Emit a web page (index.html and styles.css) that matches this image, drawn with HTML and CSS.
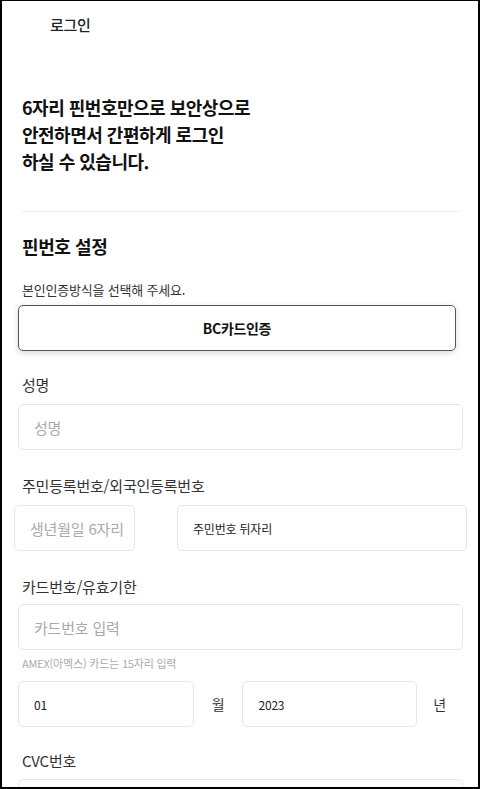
FILE: index.html
```html
<!DOCTYPE html>
<html lang="ko">
<head>
    <meta charset="utf-8">
    <title>로그인</title>
    <link rel="stylesheet" href="styles.css">
</head>
<body>
    <div class="frame">
        <header class="top-bar">
            <span class="top-title">로그인</span>
        </header>

        <h1 class="intro">6자리 핀번호만으로 보안상으로<br>안전하면서 간편하게 로그인<br>하실 수 있습니다.</h1>

        <div class="divider"></div>

        <div class="form-box">
            <h2 class="form-title">핀번호 설정</h2>
            <p class="desc">본인인증방식을 선택해 주세요.</p>
            <button class="auth-btn">BC카드인증</button>

            <div class="group first">
                <label class="field-label">성명</label>
                <input type="text" class="field" placeholder="성명">
            </div>

            <div class="group">
                <label class="field-label">주민등록번호/외국인등록번호</label>
                <div class="id-row">
                    <input type="text" class="field birth" placeholder="생년월일 6자리">
                    <input type="text" class="field back small-dark" placeholder="주민번호 뒤자리">
                </div>
            </div>

            <div class="group">
                <label class="field-label tight">카드번호/유효기한</label>
                <input type="text" class="field" placeholder="카드번호 입력">
                <p class="hint">AMEX(아멕스) 카드는 15자리 입력</p>
                <div class="exp-row">
                    <input type="text" class="field month small-dark" value="01">
                    <span class="unit">월</span>
                    <input type="text" class="field year small-dark" value="2023">
                    <span class="unit last">년</span>
                </div>
            </div>

            <div class="group cvc">
                <label class="field-label">CVC번호</label>
                <input type="text" class="field">
            </div>
        </div>
    </div>
</body>
</html>
```

FILE: styles.css
```css
body {
    margin: 0;
    padding: 0;
    background-color: white;
    font-family: "Noto Sans CJK KR", "Noto Sans", sans-serif;
    color: #222;
}

.frame {
    box-sizing: border-box;
    width: 480px;
    height: 789px;
    border: 2px solid #000;
    border-top-width: 1px;
    overflow: hidden;
}

.top-bar {
    height: 47px;
    line-height: 47px;
    padding-left: 48px;
}

.top-title {
    font-size: 15px;
    font-weight: 500;
    letter-spacing: -0.3px;
    color: #222;
}

.intro {
    margin: 46px 0 0 20px;
    font-size: 18px;
    font-weight: 700;
    line-height: 27px;
    letter-spacing: -0.5px;
    color: #111;
}

.divider {
    height: 1px;
    margin: 36px 18px 0 20px;
    background-color: #eee;
}

.form-box {
    padding: 0 16px;
}

.form-title {
    margin: 21px 0 0 4px;
    font-size: 18px;
    font-weight: 700;
    line-height: 26px;
    letter-spacing: -0.4px;
    color: #111;
}

.desc {
    margin: 21px 0 0 4px;
    font-size: 13px;
    line-height: 20px;
    letter-spacing: -0.2px;
    color: #333;
}

.auth-btn {
    display: block;
    box-sizing: border-box;
    width: 438px;
    height: 46px;
    margin-top: 5px;
    background-color: white;
    border: 1px solid #555;
    border-radius: 5px;
    box-shadow: 0 2px 6px rgba(0, 0, 0, 0.15);
    font-family: inherit;
    font-size: 14px;
    font-weight: 700;
    letter-spacing: -0.3px;
    color: #111;
}

.group {
    margin-top: 25px;
}

.group.first {
    margin-top: 23px;
}

.group.cvc {
    margin-top: 23px;
}

.field-label {
    display: block;
    margin: 0 0 8px 4px;
    font-size: 15px;
    line-height: 22px;
    letter-spacing: -0.2px;
    color: #333;
}

.field-label.tight {
    margin-bottom: 6px;
}

.group.cvc .field-label {
    margin-bottom: 7px;
}

.field {
    display: block;
    flex: none;
    box-sizing: border-box;
    width: 445px;
    height: 46px;
    padding: 0 15px;
    border: 1px solid #e6e6e6;
    border-radius: 5px;
    background-color: white;
    font-family: inherit;
    font-size: 15px;
    letter-spacing: -0.2px;
    color: #222;
    outline: none;
}

.field::placeholder {
    color: #aaa;
}

.small-dark {
    font-size: 12px;
    color: #222;
}

.small-dark::placeholder {
    color: #222;
}

.id-row {
    display: flex;
    gap: 42px;
    margin-left: -4px;
}

.field.birth {
    width: 121px;
    padding-right: 2px;
}

.field.back {
    width: 290px;
}

.hint {
    margin: 5px 0 0 4px;
    font-size: 11px;
    line-height: 16px;
    letter-spacing: -0.2px;
    color: #aaa;
}

.exp-row {
    display: flex;
    align-items: center;
    margin-top: 10px;
}

.field.month {
    width: 176px;
}

.field.year {
    width: 175px;
}

.unit {
    width: 49px;
    text-align: center;
    font-size: 14px;
    color: #333;
}

.unit.last {
    width: 45px;
}
```
